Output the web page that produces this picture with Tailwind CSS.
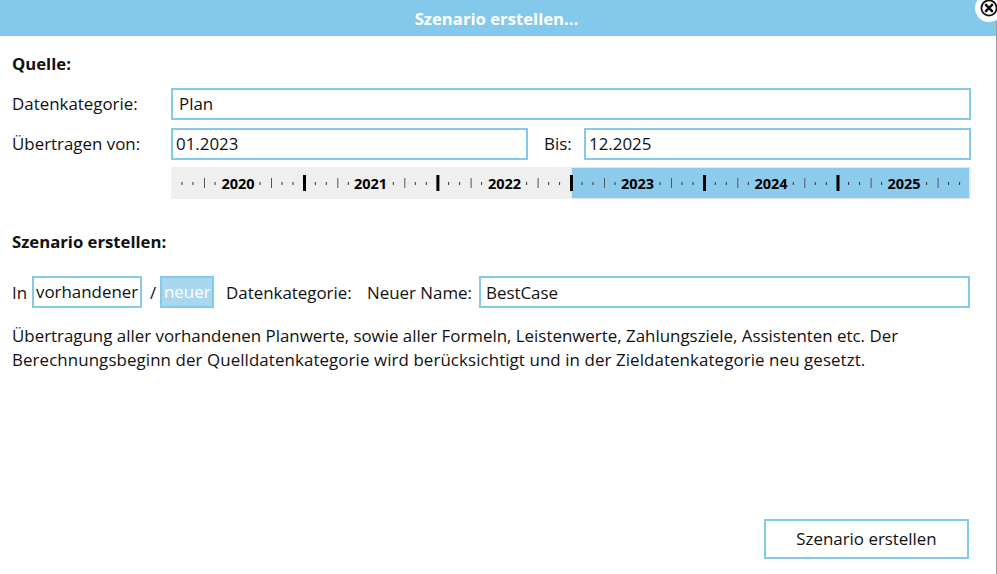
<!DOCTYPE html>
<html lang="de">
<head>
<meta charset="utf-8">
<script src="https://cdn.jsdelivr.net/npm/@tailwindcss/browser@4"></script>
<title>Szenario erstellen</title>
</head>
<body class="bg-white overflow-hidden">
<div class="relative w-[997px] h-[574px] flex flex-col font-['Open_Sans',sans-serif] text-[16.9px] text-[#111] overflow-hidden">
    <!-- Header -->
    <div class="h-[36px] bg-[#82c9ec] text-white font-bold text-center leading-[38px] text-[16.7px] pr-[4px] shrink-0">Szenario erstellen...</div>

    <!-- Close button -->
    <div class="absolute left-[975px] top-[-6px] w-[28px] h-[28px] rounded-full bg-white flex items-center justify-center">
        <svg class="w-[20px] h-[20px]" viewBox="0 0 20 20" fill="none" stroke="#111" stroke-width="1.800">
            <circle cx="10" cy="10" r="7.600"></circle>
            <path stroke-width="2.400" d="M6.200 6.200l7.600 7.600M13.800 6.200l-7.600 7.600"></path>
        </svg>
    </div>
    <div class="absolute right-0 top-[22px] bottom-0 w-px bg-[#9a9a9a]"></div>

    <div class="flex-1 flex flex-col pl-[12px] pr-[26px] pt-[17px] pb-[15px]">
        <div class="font-bold text-[16.7px] leading-[22px] mb-[13px]">Quelle:</div>

        <!-- Quelle -->
        <div class="flex items-center h-[32px] mb-[8px]">
            <div class="w-[159px]">Datenkategorie:</div>
            <div class="flex-1 h-full border-2 border-[#82c9ec] pl-[6px] leading-[28px]">Plan</div>
        </div>
        <div class="flex items-center h-[32px] mb-[7px]">
            <div class="w-[159px]">Übertragen von:</div>
            <div class="w-[357px] h-full border-2 border-[#82c9ec] pl-[3px] leading-[28px]">01.2023</div>
            <div class="w-[56px] pl-[16px]">Bis:</div>
            <div class="flex-1 h-full border-2 border-[#82c9ec] pl-[3px] leading-[28px]">12.2025</div>
        </div>

        <!-- Timeline -->
        <div class="ml-[159px] h-[32px] w-[800px] bg-[#efefef] flex">
            <svg class="block" width="800" height="32" viewBox="0 0 800 32">
                <defs>
                    <g id="year">
                        <path d="M11 15v3M22 15v3M44 15v3M89 15v3M111 15v3M122 15v3" stroke="#333" stroke-width="1"></path>
                        <path d="M33.500 11v10M100.500 11v10" stroke="#555" stroke-width="1"></path>
                    </g>
                </defs>
                <rect x="401" y="1" width="397" height="30" fill="#8ccbec"></rect>
                <rect x="400.500" y="0.500" width="398" height="31" fill="none" stroke="#dfe9ef" stroke-width="1"></rect>
                <use href="#year" x="0"></use>
                <use href="#year" x="133.300"></use>
                <use href="#year" x="266.600"></use>
                <use href="#year" x="400"></use>
                <use href="#year" x="533.300"></use>
                <use href="#year" x="666.600"></use>
                <path d="M133.500 8v16M266.900 8v16M400.500 8v16M533.500 8v16M667 8v16" stroke="#000" stroke-width="3"></path>
                <g font-family="'Open Sans', sans-serif" font-weight="700" font-size="14.500" fill="#000" text-anchor="middle">
                    <text x="67" y="22">2020</text>
                    <text x="199.500" y="22">2021</text>
                    <text x="333.500" y="22">2022</text>
                    <text x="466.500" y="22">2023</text>
                    <text x="600" y="22">2024</text>
                    <text x="733" y="22">2025</text>
                </g>
            </svg>
        </div>

        <div class="font-bold text-[16.7px] leading-[22px] mt-[32px] mb-[23px]">Szenario erstellen:</div>

        <!-- Ziel -->
        <div class="flex items-center h-[32px] mb-[16px] pr-[1px]">
            <div class="w-[20px] pt-[2px]">In</div>
            <div class="w-[110px] h-full border-2 border-[#82c9ec] pl-[2px] leading-[27px]">vorhandener</div>
            <div class="w-[18px] pl-[8px] pt-[2px]">/</div>
            <div class="w-[54px] h-full border-2 border-[#82c9ec] bg-[#a9d7ee] text-white pl-[2px] leading-[27px]">neuer</div>
            <div class="ml-[12px] w-[141px] pt-[2px]">Datenkategorie:</div>
            <div class="w-[112px] pt-[2px]">Neuer Name:</div>
            <div class="flex-1 h-full border-2 border-[#82c9ec] pl-[5px] leading-[30px]">BestCase</div>
        </div>

        <p class="leading-[24px] w-[960px]">Übertragung aller vorhandenen Planwerte, sowie aller Formeln, Leistenwerte, Zahlungsziele, Assistenten etc. Der<br><span class="tracking-[0.09px]">Berechnungsbeginn der Quelldatenkategorie wird berücksichtigt und in der Zieldatenkategorie neu gesetzt.</span></p>

        <div class="mt-auto flex justify-end pr-[2px]">
            <button class="w-[205px] h-[40px] border-2 border-[#82c9ec] bg-white">Szenario erstellen</button>
        </div>
    </div>
</div>
</body>
</html>
